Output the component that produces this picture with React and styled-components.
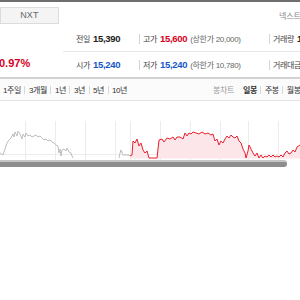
import React from 'react';
import styled, { createGlobalStyle } from 'styled-components';

const GlobalStyle = createGlobalStyle`
  body {
    margin: 0;
    background: #fff;
    font-family: 'Liberation Sans', 'Noto Sans CJK KR', sans-serif;
  }
  #root {
    width: 300px;
    overflow: hidden;
  }
`;

const Page = styled.div`
  width: 340px;
  white-space: nowrap;
  color: #333;
`;

const TopBar = styled.div`
  height: 2px;
  background: #6e6e6e;
`;

const Header = styled.div`
  display: flex;
  align-items: center;
  height: 24px;
  padding-top: 2px;
  box-sizing: border-box;
`;

const NxtTab = styled.div`
  width: 63px;
  height: 17px;
  box-sizing: border-box;
  border: 1px solid #dcdcdc;
  background: #f4f4f4;
  color: #666;
  font-size: 9px;
  display: flex;
  align-items: center;
  justify-content: center;
  letter-spacing: 0.2px;
`;

const HeaderNote = styled.span`
  margin-left: 220px;
  font-size: 8px;
  color: #888;
`;

const InfoSection = styled.div`
  display: flex;
`;

const PriceCol = styled.div`
  width: 63px;
  display: flex;
  align-items: flex-end;
  padding-bottom: 8px;
  box-sizing: border-box;
`;

const Rate = styled.span`
  font-size: 11px;
  font-weight: 700;
  color: #d6001c;
  margin-left: -1px;
`;

const InfoTable = styled.div`
  flex: 1;
`;

const InfoRow = styled.div`
  display: grid;
  grid-template-columns: 76px 130px auto;
  height: 25px;
  align-items: center;
  border-bottom: ${(p) => (p.$last ? 'none' : '1px solid #e6e6e6')};
`;

const Cell = styled.div`
  display: flex;
  align-items: center;
  gap: 3px;
  padding-left: ${(p) => (p.$first ? '13px' : '4px')};
  position: relative;
  &::before {
    content: '';
    display: ${(p) => (p.$first ? 'none' : 'block')};
    position: absolute;
    left: 0;
    top: 50%;
    margin-top: -5px;
    width: 1px;
    height: 10px;
    background: #d4d4d4;
  }
`;

const Label = styled.span`
  font-size: 8px;
  color: #444;
  letter-spacing: -0.4px;
`;

const Value = styled.span`
  font-size: 9.5px;
  font-weight: 700;
  letter-spacing: -0.3px;
  color: ${(p) => p.$color || '#222'};
`;

const Sub = styled.span`
  font-size: 8px;
  color: #666;
  letter-spacing: -0.3px;
`;

const PeriodBar = styled.div`
  display: flex;
  align-items: center;
  height: 21px;
  border-top: 2px solid #d2d2d2;
  border-bottom: 1px solid #e4e4e4;
  background: #fbfbfb;
  padding-left: 3px;
`;

const Group = styled.div`
  display: flex;
  align-items: center;
  margin-left: ${(p) => p.$offset || '0'};
`;

const PeriodItem = styled.span`
  font-size: 8px;
  color: ${(p) => (p.$muted ? '#999' : '#333')};
  font-weight: ${(p) => (p.$bold ? 700 : 400)};
  letter-spacing: -0.4px;
  margin-right: ${(p) => (p.$muted ? '9px' : '0')};
`;

const Sep = styled.i`
  display: block;
  width: 1px;
  height: 8px;
  background: #d8d8d8;
  margin: 0 3.5px;
`;

const ChartBox = styled.div`
  height: 59px;
  svg {
    display: block;
  }
`;

const ScrollTrack = styled.div`
  height: 7px;
  width: 300px;
`;

const ScrollThumb = styled.div`
  width: 287px;
  height: 100%;
  box-sizing: border-box;
  background: #8d8d8d;
  border-top: 2px solid #c4c4c4;
  border-radius: 0 3px 3px 0;
`;

const grayA = [
  [0, 150], [3, 152], [5, 146], [7, 140], [9, 137], [11, 135], [13, 131], [14, 134], [15, 129],
  [17, 133], [18, 128], [20, 131], [22, 136], [23, 131], [25, 134], [26, 130], [28, 133], [30, 132],
  [32, 134], [34, 133], [36, 132], [38, 134], [40, 133], [42, 135], [44, 137], [46, 136], [48, 138],
  [50, 137], [52, 139], [54, 140], [56, 142], [58, 143], [59, 150], [60, 146], [61, 153], [62, 147],
  [64, 146], [66, 148], [67, 145], [69, 149], [71, 150], [72, 153], [73, 155],
];

const grayB = [[119, 155], [120, 150], [121, 147], [123, 152], [126, 152], [129, 152], [130, 153]];

const red = [
  [130, 153], [132, 152], [133, 138], [135, 140], [137, 136], [139, 143], [141, 140], [143, 147],
  [145, 150], [147, 148], [149, 155], [157, 155], [159, 137], [162, 136], [164, 139], [167, 135],
  [170, 136], [173, 134], [175, 137], [177, 134], [180, 134], [183, 136], [185, 130], [187, 133],
  [189, 130], [191, 131], [193, 129], [196, 130], [199, 131], [202, 129], [205, 131], [208, 130],
  [211, 132], [213, 131], [215, 138], [217, 136], [219, 142], [221, 138], [223, 140], [225, 136],
  [227, 133], [229, 135], [231, 132], [233, 134], [235, 135], [237, 133], [239, 138], [241, 140],
  [243, 146], [245, 150], [246, 155], [248, 148], [249, 142], [251, 146], [253, 150], [255, 153],
  [257, 150], [259, 155], [261, 152], [263, 155], [265, 153], [267, 154], [269, 152], [271, 154],
  [273, 152], [275, 154], [277, 153], [279, 154], [281, 152], [283, 154], [285, 150], [287, 148],
  [289, 151], [291, 150], [293, 147], [295, 149], [297, 144], [300, 142],
];

const toPts = (arr) => arr.map(([x, y]) => `${x},${y}`).join(' ');
const gridX = [25, 55, 85, 115, 130, 160, 190, 220, 248, 278];

const Chart = () => (
  <ChartBox>
    <svg width="300" height="59" viewBox="0 98 300 59">
      {gridX.map((x) => (
        <line key={x} x1={x + 0.5} x2={x + 0.5} y1="118" y2="157" stroke="#ececec" strokeWidth="1" />
      ))}
      <line x1="0" x2="300" y1="151.5" y2="151.5" stroke="#ececec" strokeWidth="1" />
      <polygon points={`130,155.5 ${toPts(red)} 300,155.5`} fill="#fde6e9" />
      <polyline points={toPts(grayA)} fill="none" stroke="#bdbdbd" strokeWidth="1" />
      <polyline points={toPts(grayB)} fill="none" stroke="#bdbdbd" strokeWidth="1" />
      <polyline points={toPts(red)} fill="none" stroke="#e8202e" strokeWidth="1" />
    </svg>
  </ChartBox>
);

const periods = ['1주일', '3개월', '1년', '3년', '5년', '10년'];
const candles = ['일봉', '주봉', '월봉'];

export default function App() {
  return (
    <>
      <GlobalStyle />
      <Page>
        <TopBar />
        <Header>
          <NxtTab>NXT</NxtTab>
          <HeaderNote>넥스트레이드 기준</HeaderNote>
        </Header>
        <InfoSection>
          <PriceCol>
            <Rate>0.97%</Rate>
          </PriceCol>
          <InfoTable>
            <InfoRow>
              <Cell $first>
                <Label>전일</Label>
                <Value>15,390</Value>
              </Cell>
              <Cell>
                <Label>고가</Label>
                <Value $color="#d6001c">15,600</Value>
                <Sub>(상한가 20,000)</Sub>
              </Cell>
              <Cell>
                <Label>거래량</Label>
                <Value>118,402</Value>
              </Cell>
            </InfoRow>
            <InfoRow $last>
              <Cell $first>
                <Label>시가</Label>
                <Value $color="#1757c9">15,240</Value>
              </Cell>
              <Cell>
                <Label>저가</Label>
                <Value $color="#1757c9">15,240</Value>
                <Sub>(하한가 10,780)</Sub>
              </Cell>
              <Cell>
                <Label>거래대금</Label>
                <Value>18억</Value>
              </Cell>
            </InfoRow>
          </InfoTable>
        </InfoSection>
        <PeriodBar>
          <Group>
            {periods.map((p, i) => (
              <React.Fragment key={p}>
                {i > 0 && <Sep />}
                <PeriodItem>{p}</PeriodItem>
              </React.Fragment>
            ))}
          </Group>
          <Group $offset="86px">
            <PeriodItem $muted>봉차트</PeriodItem>
            {candles.map((c, i) => (
              <React.Fragment key={c}>
                {i > 0 && <Sep />}
                <PeriodItem $bold={i === 0}>{c}</PeriodItem>
              </React.Fragment>
            ))}
          </Group>
        </PeriodBar>
        <Chart />
        <ScrollTrack>
          <ScrollThumb />
        </ScrollTrack>
      </Page>
    </>
  );
}
